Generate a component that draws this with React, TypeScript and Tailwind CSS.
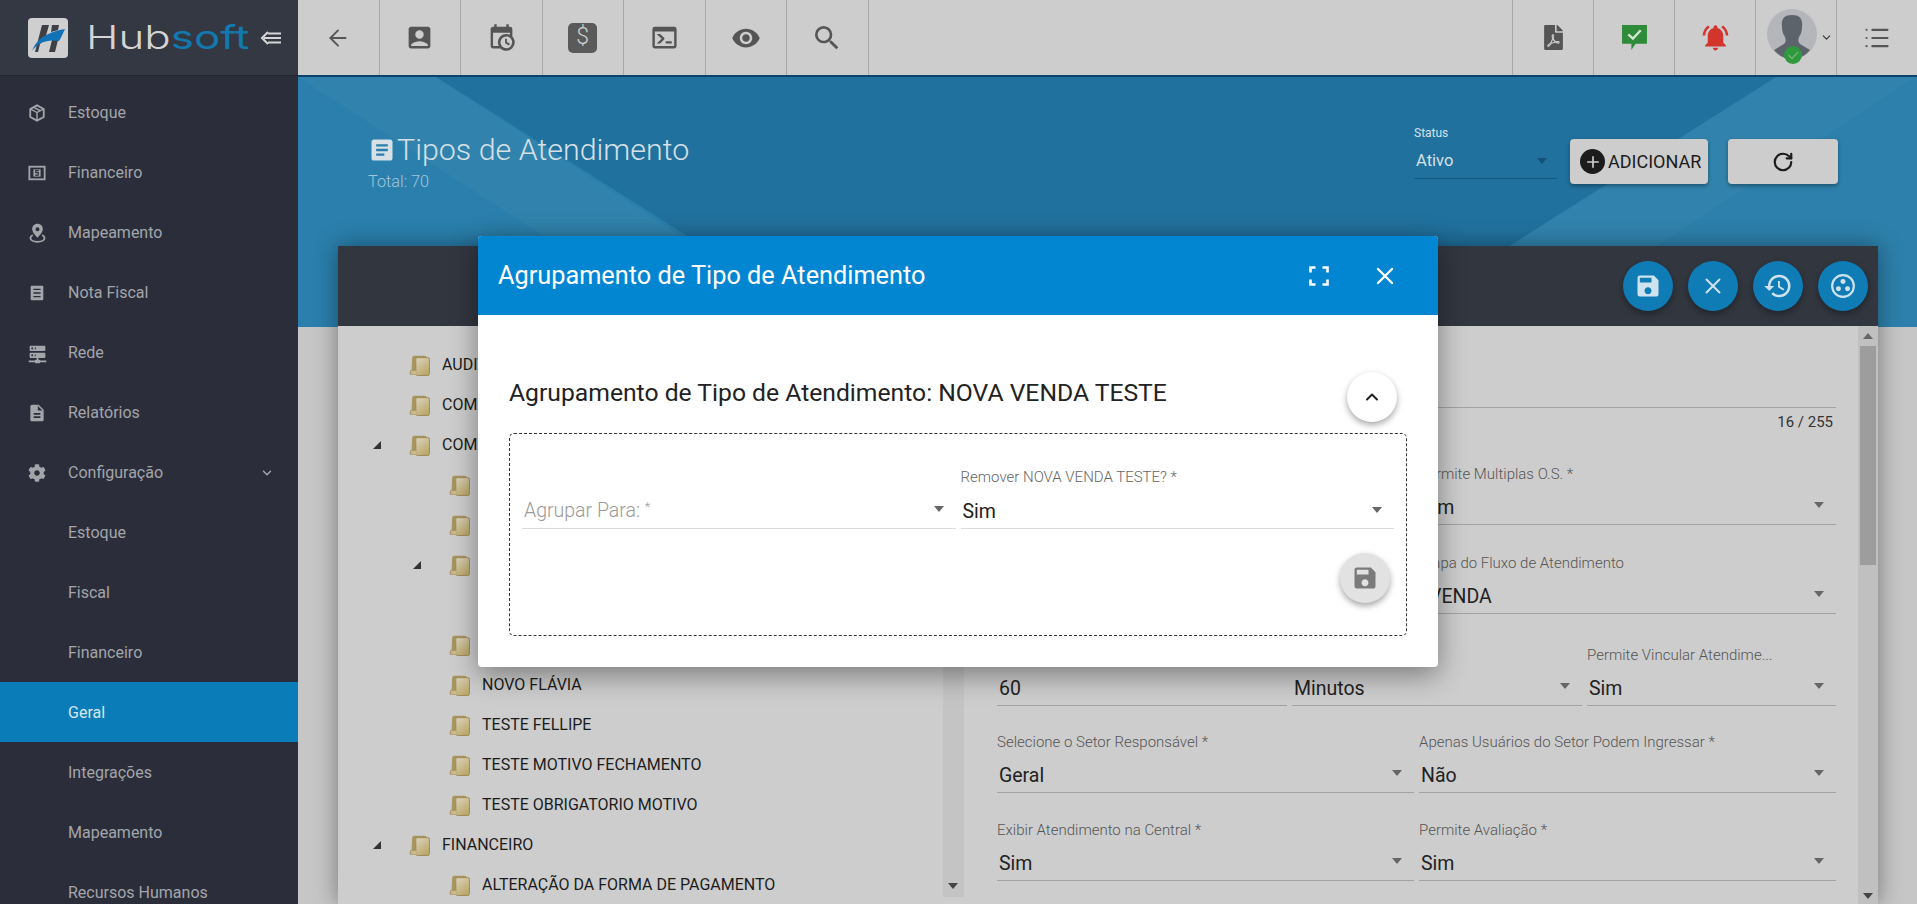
import { ArrowLeft, ChevronDown, ChevronUp, List, RotateCw, X } from "lucide-react";
import { FaCog, FaFilePdf } from "react-icons/fa";
import {
  MdAccountBox,
  MdAdd,
  MdArticle,
  MdDescription,
  MdHistory,
  MdNotificationsActive,
  MdRemoveRedEye,
  MdSave,
  MdSearch,
} from "react-icons/md";

const mdi = {
  calendarClock:
    "M15,13H16.5V15.82L18.94,17.23L18.19,18.53L15,16.69V13M19,8H5V19H9.67C9.24,18.09 9,17.07 9,16A7,7 0 0,1 16,9C17.07,9 18.09,9.24 19,9.67V8M5,21C3.89,21 3,20.1 3,19V5C3,3.89 3.89,3 5,3H6V1H8V3H16V1H18V3H19A2,2 0 0,1 21,5V11.1C22.24,12.36 23,14.09 23,16A7,7 0 0,1 16,23C14.09,23 12.36,22.24 11.1,21H5M16,11.15A4.85,4.85 0 0,0 11.15,16C11.15,18.68 13.32,20.85 16,20.85A4.85,4.85 0 0,0 20.85,16C20.85,13.32 18.68,11.15 16,11.15Z",
  console:
    "M20,19V7H4V19H20M20,3A2,2 0 0,1 22,5V19A2,2 0 0,1 20,21H4A2,2 0 0,1 2,19V5A2,2 0 0,1 4,3H20M13,17V15H18V17H13M9.58,13L5.57,9H8.4L11.7,12.3C12.09,12.69 12.09,13.33 11.7,13.72L8.42,17H5.59L9.58,13Z",
  server:
    "M13,19H14A1,1 0 0,1 15,20H22V22H15A1,1 0 0,1 14,23H10A1,1 0 0,1 9,22H2V20H9A1,1 0 0,1 10,19H11V17H4A1,1 0 0,1 3,16V12A1,1 0 0,1 4,11H20A1,1 0 0,1 21,12V16A1,1 0 0,1 20,17H13V19M4,3H20A1,1 0 0,1 21,4V8A1,1 0 0,1 20,9H4A1,1 0 0,1 3,8V4A1,1 0 0,1 4,3M9,7H10V5H9V7M9,15H10V13H9V15M5,5V7H7V5H5M5,13V15H7V13H5Z",
};

function Mdi({ d, className }: { d: string; className?: string }) {
  return (
    <svg viewBox="0 0 24 24" fill="currentColor" className={className}>
      <path d={d} />
    </svg>
  );
}

function LogoMark() {
  return (
    <svg viewBox="0 0 40 40" className="h-[40px] w-[40px] shrink-0">
      <rect width="40" height="40" rx="4" fill="#cfcfcf" />
      <path d="M7 34 L14 7 H21 L17 21 L12 26 L10 34Z" fill="#3f4046" />
      <path d="M21 34 L24 22 L31 18 L27 34Z" fill="#3f4046" />
      <path d="M24 7 H31 L30 12 L23 14Z" fill="#3f4046" />
      <path d="M4 33 C8 22 18 14 37 11 C35 15 33 20 31 23 C20 21 10 24 4 33Z" fill="#1272b8" />
    </svg>
  );
}

function CollapseIcon() {
  return (
    <svg viewBox="0 0 22 16" fill="none" stroke="#d6d6d6" strokeWidth="2" className="h-[16px] w-[22px]">
      <path d="M8 2 L2 8 L8 14" />
      <path d="M4 8 H21 M8 3.5 H21 M8 12.5 H21" />
    </svg>
  );
}

function CubeIcon() {
  return (
    <svg viewBox="0 0 20 20" fill="none" stroke="currentColor" strokeWidth="2" className="h-[18px] w-[18px]">
      <path d="M10 1.5 L17.5 5.5 V14.5 L10 18.5 L2.5 14.5 V5.5Z" />
      <path d="M2.5 5.5 L10 9.5 L17.5 5.5 M10 9.5 V18.5 M6 3.5 L13.5 7.5" strokeWidth="1.6" />
    </svg>
  );
}

function CashIcon() {
  return (
    <svg viewBox="0 0 20 20" className="h-[18px] w-[18px]">
      <rect x="1.5" y="3" width="17" height="14" fill="none" stroke="currentColor" strokeWidth="2" />
      <rect x="6" y="6" width="8" height="8" fill="currentColor" />
      <path d="M12 7.4 H8.6 V9.6 H11.4 V12.4 H8" fill="none" stroke="#2b2e3a" strokeWidth="1.2" />
    </svg>
  );
}

function PinIcon() {
  return (
    <svg viewBox="0 0 20 24" fill="currentColor" className="h-[20px] w-[17px]">
      <path d="M10 1 C6.2 1 3.6 3.8 3.6 7.2 C3.6 11 8 15.6 10 17.6 C12 15.6 16.4 11 16.4 7.2 C16.4 3.8 13.8 1 10 1Z M10 5 A2.4 2.4 0 1 1 10 9.8 A2.4 2.4 0 1 1 10 5Z" fillRule="evenodd" />
      <path d="M4.4 14.4 C2.4 15.4 1.5 16.6 1.5 18 C1.5 20.8 5.5 22.6 10 22.6 C14.5 22.6 18.5 20.8 18.5 18 C18.5 16.6 17.6 15.4 15.6 14.4" fill="none" stroke="currentColor" strokeWidth="2.2" />
    </svg>
  );
}

function NotaIcon() {
  return (
    <svg viewBox="0 0 20 20" className="h-[18px] w-[18px]">
      <rect x="3" y="2" width="14" height="16" rx="1" fill="currentColor" />
      <path d="M6 6 H14 M6 10 H14 M6 14 H14" stroke="#2b2e3a" strokeWidth="1.6" />
    </svg>
  );
}

function RingDotsIcon() {
  return (
    <svg viewBox="0 0 24 24" className="h-[26px] w-[26px]" fill="#cfe3ef">
      <circle cx="12" cy="12" r="10" fill="none" stroke="#cfe3ef" strokeWidth="2" />
      <circle cx="12" cy="7.8" r="2.3" />
      <circle cx="7.8" cy="14.6" r="2.3" />
      <circle cx="16.2" cy="14.6" r="2.3" />
    </svg>
  );
}

function FolderIcon() {
  return (
    <svg viewBox="0 0 20 20" className="h-[21px] w-[21px] shrink-0">
      <defs>
        <linearGradient id="fold" x1="0" y1="0" x2="0.6" y2="1">
          <stop offset="0" stopColor="#dcd4bd" />
          <stop offset="1" stopColor="#bca86c" />
        </linearGradient>
      </defs>
      <path d="M0.5 17 Q0.5 14.5 2.5 13.5 L3 3 Q3 0.8 5 0.8 H15 Q17 0.8 17 3 V10 H8 V19 H2 Q0.5 19 0.5 17Z" fill="#a8965f" />
      <rect x="6.5" y="2.5" width="13" height="17" rx="1.6" fill="url(#fold)" stroke="#9c8a55" strokeWidth="0.9" />
      <path d="M1.5 15 H7 V18.5 H2.2Z" fill="#c9b98c" />
    </svg>
  );
}

function Caret({ className = "" }: { className?: string }) {
  return <span className={`h-0 w-0 border-x-[5px] border-t-[6px] border-x-transparent border-t-[#666] ${className}`} />;
}

const topLeft = [
  <ArrowLeft key="a" className="h-[26px] w-[26px] text-[#555]" strokeWidth={1.7} />,
  <MdAccountBox key="b" className="h-[29px] w-[29px] text-[#555]" />,
  <Mdi key="c" d={mdi.calendarClock} className="h-[29px] w-[29px] text-[#555]" />,
  <div key="d" className="flex h-[30px] w-[29px] items-center justify-center rounded-[5px] bg-[#5a5a5a] text-[23px] font-light text-[#cfcfcf]">$</div>,
  <Mdi key="e" d={mdi.console} className="h-[29px] w-[29px] text-[#555]" />,
  <MdRemoveRedEye key="f" className="h-[30px] w-[30px] text-[#555]" />,
  <MdSearch key="g" className="h-[32px] w-[32px] text-[#555]" />,
];

const mainMenu = [
  { label: "Estoque", icon: <CubeIcon /> },
  { label: "Financeiro", icon: <CashIcon /> },
  { label: "Mapeamento", icon: <PinIcon /> },
  { label: "Nota Fiscal", icon: <NotaIcon /> },
  { label: "Rede", icon: <Mdi d={mdi.server} className="h-[21px] w-[21px]" /> },
  { label: "Relatórios", icon: <MdDescription className="h-[20px] w-[20px]" /> },
];

const subMenu = ["Estoque", "Fiscal", "Financeiro", "Geral", "Integrações", "Mapeamento", "Recursos Humanos"];

const tree = [
  { label: "AUDITORIA", level: 0 },
  { label: "COMERCIAL", level: 0 },
  { label: "COMERCIAL", level: 0, open: true },
  { label: "", level: 1 },
  { label: "", level: 1 },
  { label: "", level: 1, open: true },
  { label: "", level: 2, hidden: true },
  { label: "", level: 1 },
  { label: "NOVO FLÁVIA", level: 1 },
  { label: "TESTE FELLIPE", level: 1 },
  { label: "TESTE MOTIVO FECHAMENTO", level: 1 },
  { label: "TESTE OBRIGATORIO MOTIVO", level: 1 },
  { label: "FINANCEIRO", level: 0, open: true },
  { label: "ALTERAÇÃO DA FORMA DE PAGAMENTO", level: 1 },
];

function Field({ label, value, caret = true, indent = false }: { label?: string; value?: string; caret?: boolean; indent?: boolean }) {
  return (
    <div className="flex h-[58px] flex-col border-b border-[#a3a3a3]">
      <div className="mt-[-2px] h-[19px] truncate text-[15px] leading-[19px] font-light text-[#555]">{label}</div>
      <div className={`mt-[12px] flex h-[24px] items-center justify-between pr-[12px] text-[19.5px] text-[#222] ${indent ? "pl-[10px]" : "pl-[2px]"}`}>
        <span className="mt-[-1px]">{value}</span>
        {caret && <Caret className="mt-[-6px]" />}
      </div>
    </div>
  );
}

function Fab({ children, className = "" }: { children: React.ReactNode; className?: string }) {
  return (
    <div className={`flex h-[50px] w-[50px] items-center justify-center rounded-full shadow-[0_3px_6px_rgba(0,0,0,0.35)] ${className}`}>
      {children}
    </div>
  );
}

export default function App() {
  return (
    <div className="relative flex h-[904px] w-[1917px] overflow-hidden bg-[#c6c6c6] font-['Roboto',sans-serif]">
      <aside className="flex h-full w-[298px] shrink-0 flex-col bg-[#2b2e3a] text-[#a3a5aa]">
        <div className="flex h-[76px] shrink-0 items-center border-b border-[#23252e] bg-[#343843] pl-[28px]">
          <LogoMark />
          <span className="ml-[18px] w-[165px] shrink-0 origin-left scale-x-[1.33] font-['Inter',sans-serif] text-[33px] leading-none font-light whitespace-nowrap text-[#d4d4d4]">
            Hub<span className="font-normal text-[#1278ad]">soft</span>
          </span>
          <span className="ml-[9px]"><CollapseIcon /></span>
        </div>
        <nav className="pt-[6px] text-[16px]">
          {mainMenu.map((item) => (
            <div key={item.label} className="flex h-[60px] items-center pt-[2px]">
              <span className="flex w-[68px] justify-center pl-[6px]">{item.icon}</span>
              {item.label}
            </div>
          ))}
          <div className="flex h-[60px] items-center pt-[2px]">
            <span className="flex w-[68px] justify-center pl-[6px]"><FaCog className="h-[18px] w-[18px]" /></span>
            <span className="flex-1">Configuração</span>
            <ChevronDown className="mr-[24px] h-[14px] w-[14px]" strokeWidth={2.5} />
          </div>
          {subMenu.map((label) => (
            <div key={label} className={`flex h-[60px] items-center pt-[2px] pl-[68px] ${label === "Geral" ? "bg-[#0a7db9] text-[#d8e6ee]" : ""}`}>
              {label}
            </div>
          ))}
        </nav>
      </aside>

      <div className="flex min-w-0 flex-1 flex-col">
        <header className="flex h-[77px] shrink-0 border-b-2 border-[#0f426b] bg-[#cdcdcd]">
          {topLeft.map((icon, i) => (
            <div key={i} className="flex w-[81.5px] items-center justify-center border-r border-[#a9a9a9]">{icon}</div>
          ))}
          <div className="flex-1 border-r border-[#a9a9a9]" />
          <div className="flex w-[81px] items-center justify-center border-r border-[#a9a9a9]"><FaFilePdf className="h-[25px] w-[21px] text-[#555]" /></div>
          <div className="flex w-[81px] items-center justify-center border-r border-[#a9a9a9]">
            <svg viewBox="0 0 26 26" className="h-[27px] w-[27px]">
              <path d="M1 1 H25 V19 H14 L10 25 V19 H1Z" fill="#2e8b3a" />
              <path d="M7 10 L11.5 14 L19 6" fill="none" stroke="#d5e8d5" strokeWidth="2.2" />
            </svg>
          </div>
          <div className="flex w-[81px] items-center justify-center border-r border-[#a9a9a9]"><MdNotificationsActive className="h-[31px] w-[31px] text-[#d2352b]" /></div>
          <div className="relative flex w-[81px] items-center border-r border-[#a9a9a9] pl-[11px]">
            <svg viewBox="0 0 50 58" className="h-[58px] w-[50px]">
              <circle cx="25" cy="25" r="25" fill="#b4b6ba" />
              <path d="M25 6 C33 6 36 10 35 18 C35 22 34 25 32 28 C31 31 31 33 33 35 L43 41 C38 47 32 50 25 50 C18 50 12 47 7 41 L17 35 C19 33 19 31 18 28 C16 25 15 22 15 18 C14 10 17 6 25 6Z" fill="#5c636b" />
              <circle cx="26" cy="46" r="9" fill="#2e9a3d" />
              <path d="M21.5 46 L25 49.5 L31 43" fill="none" stroke="#6fae74" strokeWidth="1.6" />
            </svg>
            <ChevronDown className="ml-[3px] h-[13px] w-[13px] text-[#333]" strokeWidth={2} />
          </div>
          <div className="flex w-[80px] shrink-0 items-center justify-center"><List className="h-[28px] w-[28px] text-[#555]" strokeWidth={1.8} /></div>
        </header>

        <div className="relative flex min-h-0 flex-1 flex-col">
          <svg className="absolute inset-x-0 top-0 h-[250px] w-full" viewBox="0 0 1619 250" preserveAspectRatio="none">
            <rect width="1619" height="250" fill="#21719e" />
            <polygon points="0,0 138,0 391,160 250,160 247,250 0,250" fill="#2a7fac" />
            <polygon points="0,0 138,0 400,170 262,170" fill="#3183ad" />
            <polygon points="1619,0 1619,250 1210,250 1358,170" fill="#2d80ab" />
            <polygon points="1478,0 1619,0 1358,170 1210,170" fill="#3183ad" />
          </svg>

          <div className="relative flex h-[169px] shrink-0 pr-[79px] pl-[70px]">
            <div className="pt-[59px]">
              <div className="flex items-center text-[30.4px] leading-[26px] font-light text-[#d6e0e6]">
                <MdArticle className="mr-[1px] h-[28px] w-[28px]" />
                Tipos de Atendimento
              </div>
              <div className="mt-[9px] text-[16.3px] leading-[18px] font-light text-[#a4c6d9]">Total: 70</div>
            </div>
            <div className="ml-auto flex pt-[49px]">
              <div className="h-[53px] w-[143px] border-b border-[#175a80] text-[#d6e0e6]">
                <div className="h-[14px] text-[12px] leading-[14px]">Status</div>
                <div className="flex items-center justify-between pt-[11px] pr-[10px] pl-[2px] text-[16.5px] leading-[20px]">
                  Ativo
                  <span className="h-0 w-0 border-x-[5px] border-t-[6px] border-x-transparent border-t-[#175077]" />
                </div>
              </div>
              <div className="mt-[13px] ml-[13px] flex h-[45px] w-[138px] items-center rounded-[4px] bg-[#cdcdcd] pl-[10px] text-[18px] text-[#1c1c1c] shadow-[0_2px_4px_rgba(0,0,0,0.35)]">
                <span className="mr-[3px] flex h-[25px] w-[25px] items-center justify-center rounded-full bg-[#1c1c1c]"><MdAdd className="h-[20px] w-[20px] text-[#cdcdcd]" /></span>
                ADICIONAR
              </div>
              <div className="mt-[13px] ml-[20px] flex h-[45px] w-[110px] items-center justify-center rounded-[4px] bg-[#cdcdcd] text-[#1c1c1c] shadow-[0_2px_4px_rgba(0,0,0,0.35)]">
                <RotateCw className="h-[22px] w-[22px]" strokeWidth={2.4} />
              </div>
            </div>
          </div>

          <div className="relative mr-[39px] ml-[40px] flex min-h-0 flex-1 flex-col bg-[#cdcdcd] shadow-[0_0_22px_rgba(0,0,0,0.4)]">
            <div className="flex h-[80px] shrink-0 items-center justify-end gap-[15px] bg-[#32363f] pr-[10px]">
              <Fab className="bg-[#0f7cb5]"><MdSave className="h-[28px] w-[28px] text-[#cfe3ef]" /></Fab>
              <Fab className="bg-[#0f7cb5]"><X className="h-[26px] w-[26px] text-[#cfe3ef]" strokeWidth={1.8} /></Fab>
              <Fab className="bg-[#0f7cb5]"><MdHistory className="h-[30px] w-[30px] text-[#cfe3ef]" /></Fab>
              <Fab className="bg-[#0f7cb5]"><RingDotsIcon /></Fab>
            </div>

            <div className="flex min-h-0 flex-1">
              <div className="w-[605px] shrink-0 overflow-hidden pt-[19px]">
                {tree.map((row, i) => (
                  <div key={i} className="relative flex h-[40px] items-center text-[16px] text-[#1c1c1c]">
                    <span style={{ width: row.level === 0 ? 71 : 111 }} className="relative shrink-0">
                      {row.open && (
                        <span
                          style={{ right: 28 }}
                          className="absolute top-1/2 h-0 w-0 -translate-y-1/2 border-t-[8px] border-r-[8px] border-b-0 border-l-[8px] border-t-transparent border-r-[#333] border-l-transparent"
                        />
                      )}
                    </span>
                    {!row.hidden && <FolderIcon />}
                    <span className="ml-[12px] whitespace-nowrap">{row.label}</span>
                  </div>
                ))}
              </div>
              <div className="relative mb-[7px] w-[21px] shrink-0 bg-[#c4c4c4]">
                <span className="absolute right-[6px] bottom-[8px] h-0 w-0 border-x-[5px] border-t-[6px] border-x-transparent border-t-[#444]" />
              </div>

              <div className="min-w-0 flex-1 pt-[24px] pr-[22px] pl-[33px]">
                <Field caret={false} />
                <div className="mt-[5px] h-[18px] pr-[3px] text-right text-[15px] leading-[18px] text-[#333]">16 / 255</div>
                <div className="mt-[36px] grid grid-cols-2 gap-x-[5px]">
                  <Field />
                  <Field label="Permite Multiplas O.S. *" value="Sim" />
                </div>
                <div className="mt-[31px] grid grid-cols-2 gap-x-[5px]">
                  <Field />
                  <Field label="Etapa do Fluxo de Atendimento" value="VENDA" indent />
                </div>
                <div className="mt-[34px] grid grid-cols-[290px_290px_1fr] gap-x-[5px]">
                  <Field value="60" caret={false} />
                  <Field value="Minutos" />
                  <Field label="Permite Vincular Atendime..." value="Sim" />
                </div>
                <div className="mt-[29px] grid grid-cols-2 gap-x-[5px]">
                  <Field label="Selecione o Setor Responsável *" value="Geral" />
                  <Field label="Apenas Usuários do Setor Podem Ingressar *" value="Não" />
                </div>
                <div className="mt-[30px] grid grid-cols-2 gap-x-[5px]">
                  <Field label="Exibir Atendimento na Central *" value="Sim" />
                  <Field label="Permite Avaliação *" value="Sim" />
                </div>
              </div>
              <div className="relative w-[20px] shrink-0 bg-[#c0c0c0]">
                <div className="mx-[2px] mt-[20px] h-[219px] bg-[#9d9d9d]" />
                <span className="absolute top-[7px] right-[5px] h-0 w-0 border-x-[5px] border-b-[6px] border-x-transparent border-b-[#666]" />
                <span className="absolute right-[5px] bottom-[5px] h-0 w-0 border-x-[5px] border-t-[6px] border-x-transparent border-t-[#444]" />
              </div>
            </div>
          </div>
        </div>
      </div>

      {/* modal */}
      <div className="absolute top-[236px] left-[478px] flex h-[431px] w-[960px] flex-col overflow-hidden rounded-[4px] bg-white shadow-[0_8px_28px_rgba(0,0,0,0.4)]">
        <div className="flex h-[79px] shrink-0 items-center bg-[#0386d2] pr-[39px] pl-[20px] text-white">
          <span className="flex-1 text-[25.3px]">Agrupamento de Tipo de Atendimento</span>
          <svg viewBox="0 0 20 20" fill="none" stroke="white" strokeWidth="2.6" className="mr-[42px] h-[20px] w-[20px]">
            <path d="M1.5 6.5 V1.5 H6.5 M13.5 1.5 H18.5 V6.5 M18.5 13.5 V18.5 H13.5 M6.5 18.5 H1.5 V13.5" />
          </svg>
          <X className="h-[28px] w-[28px]" strokeWidth={2} />
        </div>
        <div className="flex-1 px-[31px]">
          <div className="flex h-[118px] items-start justify-between pt-[57px] pr-[10px]">
            <span className="mt-[6px] text-[24.7px] leading-[30px] text-[#222]">Agrupamento de Tipo de Atendimento: NOVA VENDA TESTE</span>
            <Fab className="bg-white"><ChevronUp className="h-[20px] w-[20px] text-[#222]" strokeWidth={2.4} /></Fab>
          </div>
          <div className="h-[203px] rounded-[5px] border border-dashed border-[#333] px-[12px] pt-[36px]">
            <div className="grid grid-cols-2 gap-x-[5px]">
              <div className="flex h-[59px] flex-col justify-end border-b border-[#dcdcdc]">
                <div className="mb-[5px] flex h-[24px] items-center justify-between pr-[12px] pl-[2px] text-[19.5px] font-light text-[#9a9a9a]">
                  <span>Agrupar Para: <sup className="text-[13px]">*</sup></span>
                  <Caret className="mt-[-4px]" />
                </div>
              </div>
              <div className="flex h-[59px] flex-col border-b border-[#dcdcdc]">
                <div className="mt-[-2px] h-[19px] text-[15px] leading-[19px] font-light text-[#666]">Remover NOVA VENDA TESTE? *</div>
                <div className="mt-[13px] flex h-[24px] items-center justify-between pr-[12px] pl-[2px] text-[19.5px] text-[#222]">
                  <span>Sim</span>
                  <Caret className="mt-[-4px]" />
                </div>
              </div>
            </div>
            <div className="mt-[24px] flex justify-end pr-[4px]">
              <Fab className="bg-[#e2e2e2]"><MdSave className="h-[28px] w-[28px] text-[#7b7b7b]" /></Fab>
            </div>
          </div>
        </div>
      </div>
    </div>
  );
}
